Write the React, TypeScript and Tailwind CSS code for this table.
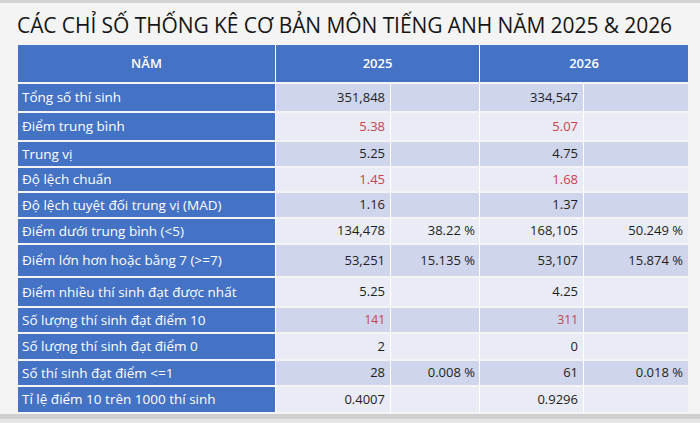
import React from 'react';

type Row = {
  label: string;
  h: string;
  a: string;
  ap?: string;
  b: string;
  bp?: string;
  red?: boolean;
  small?: boolean;
};

const rows: Row[] = [
  { label: 'Tổng số thí sinh', h: 'h-[27px]', a: '351,848', b: '334,547' },
  { label: 'Điểm trung bình', h: 'h-[27px]', a: '5.38', b: '5.07', red: true },
  { label: 'Trung vị', h: 'h-[24px]', a: '5.25', b: '4.75' },
  { label: 'Độ lệch chuẩn', h: 'h-[23px]', a: '1.45', b: '1.68', red: true },
  { label: 'Độ lệch tuyệt đối trung vị (MAD)', h: 'h-[24px]', a: '1.16', b: '1.37' },
  { label: 'Điểm dưới trung bình (<5)', h: 'h-[24px]', a: '134,478', ap: '38.22 %', b: '168,105', bp: '50.249 %' },
  { label: 'Điểm lớn hơn hoặc bằng 7 (>=7)', h: 'h-[31px]', a: '53,251', ap: '15.135 %', b: '53,107', bp: '15.874 %' },
  { label: 'Điểm nhiều thí sinh đạt được nhất', h: 'h-[28px]', a: '5.25', b: '4.25' },
  { label: 'Số lượng thí sinh đạt điểm 10', h: 'h-[24px]', a: '141', b: '311', red: true, small: true },
  { label: 'Số lượng thí sinh đạt điểm 0', h: 'h-[25px]', a: '2', b: '0' },
  { label: 'Số thí sinh đạt điểm <=1', h: 'h-[24px]', a: '28', ap: '0.008 %', b: '61', bp: '0.018 %' },
  { label: 'Tỉ lệ điểm 10 trên 1000 thí sinh', h: 'h-[25px]', a: '0.4007', b: '0.9296' },
];

export default function App() {
  return (
    <div className="w-[700px] h-[423px] overflow-hidden bg-[#f4f4f4] flex flex-col font-['Open_Sans',sans-serif]">
      {/* top edge */}
      <div className="h-[3px] bg-[#d3d3d3]" />

      {/* Title */}
      <h1 className="pl-[17px] h-[42px] pt-[3px] flex items-center text-[21px] font-medium leading-none text-[#161616] tracking-[-0.08px] whitespace-nowrap">
        CÁC CHỈ SỐ THỐNG KÊ CƠ BẢN MÔN TIẾNG ANH NĂM 2025 &amp; 2026
      </h1>

      {/* Table */}
      <div className="ml-[18px] grid grid-cols-[257px_115px_89px_104px_105px] gap-y-[2px] text-[13px]">
        <div className="h-[37px] bg-[#4472c4] text-white font-semibold flex items-center justify-center">NĂM</div>
        <div className="col-span-2 h-[37px] bg-[#4472c4] text-white font-semibold flex items-center justify-center border-l border-white">
          2025
        </div>
        <div className="col-span-2 h-[37px] bg-[#4472c4] text-white font-semibold flex items-center justify-center border-l border-white">
          2026
        </div>

        {rows.map((r, i) => {
          const band = i % 2 === 0 ? 'bg-[#cfd5ea]' : 'bg-[#e9ebf5]';
          const val = r.red ? 'text-[#c8434c]' : 'text-[#1e1e1e]';
          const size = r.small ? 'text-[12px]' : '';
          return (
            <React.Fragment key={r.label}>
              <div className={`${r.h} bg-[#4472c4] text-white text-[13.5px] pl-[4px] flex items-center whitespace-nowrap`}>{r.label}</div>
              <div className={`${r.h} ${band} ${val} ${size} border-l border-white flex items-center justify-end pr-[5px]`}>{r.a}</div>
              <div className={`${r.h} ${band} text-[#1e1e1e] border-l border-white flex items-center justify-end pr-[4px]`}>{r.ap}</div>
              <div className={`${r.h} ${band} ${val} ${size} border-l border-white flex items-center justify-end pr-[5px]`}>{r.b}</div>
              <div className={`${r.h} ${band} text-[#1e1e1e] border-l border-white flex items-center justify-end pr-[5px]`}>{r.bp}</div>
            </React.Fragment>
          );
        })}
      </div>

      {/* bottom edge */}
      <div className="mt-[2px] h-[5px] bg-[#cfcfcf]" />
      <div className="flex-1 bg-[#e6e6e6]" />
    </div>
  );
}
